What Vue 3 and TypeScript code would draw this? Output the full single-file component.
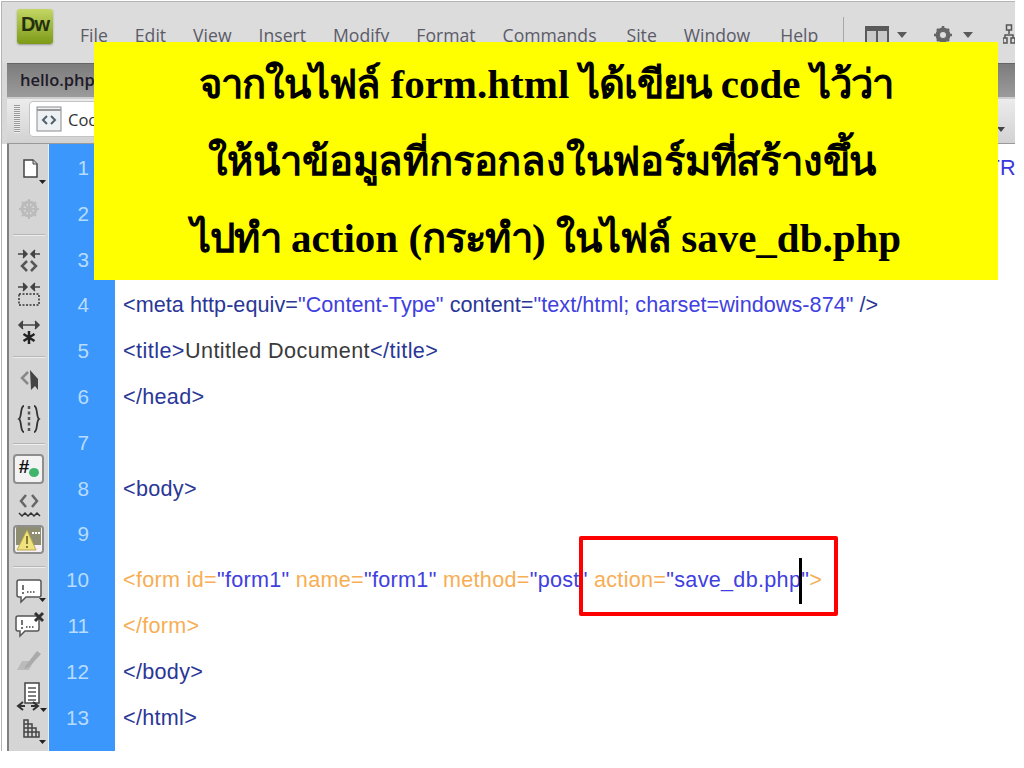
<script setup lang="ts">
const menus: string[] = ['File', 'Edit', 'View', 'Insert', 'Modify', 'Format', 'Commands', 'Site', 'Window', 'Help']
</script>

<template>
  <div class="page">
    <div class="window">
      <header class="titlebar">
        <div class="logo">Dw</div>
        <nav class="menus">
          <span v-for="m in menus" :key="m">{{ m }}</span>
        </nav>
        <div class="sep"></div>
        <svg class="ticon layout" width="44" height="18" viewBox="0 0 44 18">
          <rect x="0" y="0" width="24" height="18" fill="#5a5a5a" />
          <rect x="2" y="5" width="9" height="11" fill="#c9c9c9" />
          <rect x="13" y="5" width="9" height="11" fill="#c9c9c9" />
          <path d="M32 6h10l-5 6z" fill="#5a5a5a" />
        </svg>
        <svg class="ticon gear" width="42" height="18" viewBox="0 0 42 18">
          <circle cx="9" cy="9" r="5.500" fill="none" stroke="#666" stroke-width="4" />
          <path d="M9 0v18M0 9h18M3 3l12 12M15 3L3 15" stroke="#666" stroke-width="2.500" />
          <circle cx="9" cy="9" r="3" fill="#ddd" />
          <path d="M29 6h10l-5 6z" fill="#5a5a5a" />
        </svg>
        <svg class="ticon org" width="12" height="20" viewBox="0 0 12 20">
          <path d="M3.500 1h5v5h-5zM6 6v4M2 14v-3h8v3M0 14h4v5H0zM8 14h4v5H8z" fill="none" stroke="#555" stroke-width="1.500" />
        </svg>
      </header>

      <div class="tabbar"><span class="tab">hello.php</span></div>

      <div class="toolbar">
        <div class="grip"></div>
        <div class="codebtn">
          <svg width="26" height="26" viewBox="0 0 26 26">
            <rect x="1" y="1" width="24" height="24" fill="#eef1f3" stroke="#8b8b8b" />
            <path d="M1 4h24" stroke="#9a9a9a" stroke-width="2" />
            <path d="M11 10l-4 4 4 4M15 10l4 4-4 4" fill="none" stroke="#50606c" stroke-width="2" />
          </svg>
          <span>Code</span>
        </div>
        <svg class="tbarrow" width="8" height="5" viewBox="0 0 8 5"><path d="M0 0h8L4 5z" fill="#444" /></svg>
      </div>

      <div class="body">
        <aside class="rail">
          <svg class="i-doc" width="42" height="36" viewBox="0 0 42 36">
            <path d="M16 5h9l4 4v13H16z" fill="#fff" stroke="#444" stroke-width="1.500" />
            <path d="M25 5v4h4" fill="#ccc" stroke="#444" />
            <path d="M31 25h7l-3.500 4z" fill="#222" />
          </svg>
          <svg class="i-gear" width="42" height="34" viewBox="0 0 42 34">
            <circle cx="21" cy="17" r="7" fill="none" stroke="#bbb" stroke-width="3" />
            <path d="M21 7v20M11 17h20M14 10l14 14M28 10L14 24" stroke="#bbb" stroke-width="2" />
          </svg>
          <div class="divider d1"></div>
          <svg class="i-collapse" width="42" height="34" viewBox="0 0 42 34">
            <path d="M10 6h9M32 6h-9M15 2l4 4-4 4M27 2l-4 4 4 4" fill="#444" stroke="#444" stroke-width="1.500" />
            <path d="M19 13l-5 5 5 5M23 13l5 5-5 5" fill="none" stroke="#555" stroke-width="2.500" />
          </svg>
          <svg class="i-dotted" width="42" height="34" viewBox="0 0 42 34">
            <path d="M10 6h9M32 6h-9M15 2l4 4-4 4M27 2l-4 4 4 4" fill="#444" stroke="#444" stroke-width="1.500" />
            <rect x="11" y="13" width="20" height="11" fill="none" stroke="#333" stroke-width="1.500" stroke-dasharray="2 1.500" />
          </svg>
          <svg class="i-expand" width="42" height="34" viewBox="0 0 42 34">
            <path d="M11 7h20M15 3l-4 4 4 4M27 3l4 4-4 4" fill="#444" stroke="#444" stroke-width="1.500" />
            <path d="M21 13v13M15.500 16l11 7M26.500 16l-11 7" stroke="#222" stroke-width="2.500" />
          </svg>
          <div class="divider d2"></div>
          <svg class="i-cursor" width="42" height="28" viewBox="0 0 42 28">
            <path d="M20 7l-6 6 6 6" fill="none" stroke="#888" stroke-width="2.500" />
            <path d="M22 5l8 9v11l-3-4-4 4z" fill="#444" />
          </svg>
          <svg class="i-brace" width="42" height="34" viewBox="0 0 42 34">
            <path d="M16 4c-4 0-2 11-5 13 3 2 1 13 5 13M26 4c4 0 2 11 5 13-3 2-1 13-5 13" fill="none" stroke="#333" stroke-width="1.800" />
            <path d="M21 4v26" stroke="#555" stroke-width="2.500" stroke-dasharray="3 2.500" />
          </svg>
          <div class="divider d3"></div>
          <div class="railbtn hash">
            <span>#</span>
            <i></i>
          </div>
          <svg class="i-wave" width="42" height="28" viewBox="0 0 42 28">
            <path d="M18 3l-5 6 5 6M24 3l5 6-5 6" fill="none" stroke="#666" stroke-width="2.500" />
            <path d="M11 21l3 3 3-3 3 3 3-3 3 3 3-3 3 3" fill="none" stroke="#333" stroke-width="1.500" />
          </svg>
          <div class="railbtn warn">
            <svg width="27" height="25" viewBox="0 0 27 25">
              <rect x="1" y="0" width="25" height="18" fill="#8f8d72" />
              <rect x="1" y="18" width="25" height="7" fill="#f6f0f6" />
              <path d="M12 3l9 20H2z" fill="#efe27f" stroke="#b7a94b" />
              <path d="M12 9v8M12 19v2" stroke="#8a7d30" stroke-width="2" />
              <path d="M17 6h2M20 6h2M23 6h2" stroke="#fff" stroke-width="2" />
            </svg>
          </div>
          <div class="divider d4"></div>
          <svg class="i-c1" width="42" height="32" viewBox="0 0 42 32">
            <path d="M11 4h20a2 2 0 0 1 2 2v13a2 2 0 0 1-2 2H18l-5 5v-5h-2a2 2 0 0 1-2-2V6a2 2 0 0 1 2-2z" fill="#fff" stroke="#555" stroke-width="1.500" />
            <path d="M15 9v5M15 16v2" stroke="#444" stroke-width="1.500" />
            <path d="M19 16h9" stroke="#444" stroke-width="1.500" stroke-dasharray="1.500 1.500" />
            <path d="M31 22h7l-3.500 4z" fill="#222" />
          </svg>
          <svg class="i-c2" width="42" height="30" viewBox="0 0 42 30">
            <path d="M10 5h19a2 2 0 0 1 2 2v11a2 2 0 0 1-2 2H17l-5 5v-5h-2a2 2 0 0 1-2-2V7a2 2 0 0 1 2-2z" fill="#fff" stroke="#555" stroke-width="1.500" />
            <path d="M14 9v5M14 16v2" stroke="#444" stroke-width="1.500" />
            <path d="M18 16h9" stroke="#444" stroke-width="1.500" stroke-dasharray="1.500 1.500" />
            <path d="M27 2l8 8M35 2l-8 8" stroke="#333" stroke-width="3" />
          </svg>
          <svg class="i-pen" width="42" height="30" viewBox="0 0 42 30">
            <path d="M14 15h12l-5 9H9z" fill="#bbb" />
            <path d="M18 19L29 5l4 3-12 13-5 2z" fill="#aaa" />
          </svg>
          <svg class="i-doc2" width="42" height="36" viewBox="0 0 42 36">
            <path d="M17 3h14v20H17z" fill="#fff" stroke="#444" stroke-width="1.500" />
            <path d="M20 8h8M20 12h8M20 16h8M20 20h8" stroke="#555" stroke-width="1.500" />
            <path d="M17 26h-6M15 22l-5 4 5 4M23 26h6M25 22l5 4-5 4" fill="none" stroke="#333" stroke-width="2" />
            <path d="M32 28h7l-3.500 4z" fill="#222" />
          </svg>
          <svg class="i-tree" width="42" height="34" viewBox="0 0 42 34">
            <path d="M16 5h4v4h4v4h4v4h3v5H16zM16 9h4v13M16 13h12M16 17h15M24 13v9M28 17v5" fill="none" stroke="#444" stroke-width="1.500" />
            <path d="M31 25h7l-3.500 4z" fill="#222" />
          </svg>
        </aside>

        <div class="gutter">
          <span v-for="n in 13" :key="n">{{ n }}</span>
        </div>

        <main class="code">
          <div class="line tr">TR</div>
          <div class="line"></div>
          <div class="line"></div>
          <div class="line l-meta"><span class="nv">&lt;meta http-equiv=</span><span class="bl">"Content-Type"</span><span class="nv"> content=</span><span class="bl">"text/html; charset=windows-874"</span><span class="nv"> /&gt;</span></div>
          <div class="line l-title"><span class="nv">&lt;title&gt;</span><span class="dk">Untitled Document</span><span class="nv">&lt;/title&gt;</span></div>
          <div class="line"><span class="nv">&lt;/head&gt;</span></div>
          <div class="line"></div>
          <div class="line"><span class="nv">&lt;body&gt;</span></div>
          <div class="line"></div>
          <div class="line"><span class="or">&lt;form id=</span><span class="bl">"form1"</span><span class="or"> name=</span><span class="bl">"form1"</span><span class="or"> method=</span><span class="bl">"post"</span><span class="or"> action=</span><span class="bl">"save_db.php"</span><span class="or">&gt;</span></div>
          <div class="line"><span class="or">&lt;/form&gt;</span></div>
          <div class="line"><span class="nv">&lt;/body&gt;</span></div>
          <div class="line"><span class="nv">&lt;/html&gt;</span></div>
        </main>
      </div>
    </div>

    <div class="note">
      <p><span class="th">จากในไฟล์</span> <span class="en">form.html</span> <span class="th">ได้เขียน</span> <span class="en">code</span> <span class="th">ไว้ว่า</span></p>
      <p class="second"><span class="th">ให้นำข้อมูลที่กรอกลงในฟอร์มที่สร้างขึ้น</span></p>
      <p><span class="th">ไปทำ</span> <span class="en">action (</span><span class="th">กระทำ</span><span class="en">)</span> <span class="th">ในไฟล์</span> <span class="en">save_db.php</span></p>
    </div>
    <div class="redbox"></div>
    <div class="caret"></div>
  </div>
</template>

<style>
html, body { background: #fff; }
</style>

<style scoped>
.page {
  position: relative;
  width: 1024px;
  height: 768px;
  overflow: hidden;
  background: #fff;
}
.window {
  width: 1013px;
  height: 749px;
  margin-left: 1px;
  margin-top: 1px;
  border-top: 1px solid #b5b5b5;
  border-left: 1px solid #b5b5b5;
  display: flex;
  flex-direction: column;
  background: #d8d8d8;
  overflow: hidden;
}
.titlebar {
  height: 61px;
  flex: none;
  display: flex;
  align-items: flex-start;
  background: #dcdcdc;
  font-family: "Open Sans", sans-serif;
}
.logo {
  margin: 7px 0 0 15px;
  width: 36px;
  height: 35px;
  border-radius: 3px;
  background: linear-gradient(#c3d665, #7d9a17);
  box-shadow: 0 1px 2px #999;
  color: #25300e;
  font: bold 20px/30px "Liberation Sans", sans-serif;
  letter-spacing: -1px;
  text-align: center;
}
.menus {
  display: flex;
  gap: 27px;
  margin: 21px 0 0 27px;
  font-size: 17.600px;
  line-height: 24px;
  color: #5b5b66;
  white-space: nowrap;
}
.menus span:nth-child(8),
.menus span:nth-child(10) { margin-left: 3px; }
.sep {
  width: 1px;
  height: 30px;
  margin: 15px 0 0 auto;
  background: #a8a8a8;
}
.ticon { margin-top: 24px; flex: none; }
.layout { margin-left: 21px; }
.gear { margin-left: 25px; }
.org { margin-left: 27px; margin-top: 22px; }
.tabbar {
  height: 34px;
  flex: none;
  margin-left: 5px;
  background: linear-gradient(#7c7c7c, #9b9b9b);
  border-top: 1px solid #666;
  box-sizing: border-box;
  font: 600 16.500px/32px "Open Sans", sans-serif;
  color: #1e1a28;
}
.tab { padding-left: 13px; }
.toolbar {
  height: 47px;
  flex: none;
  box-sizing: border-box;
  margin-left: 5px;
  display: flex;
  align-items: flex-start;
  background: linear-gradient(#ececec, #d2d2d2);
  border-top: 2px solid #cfcfcf;
  border-bottom: 1px solid #999;
  position: relative;
}
.grip {
  width: 6px;
  height: 28px;
  margin: 6px 0 0 7px;
  background: repeating-linear-gradient(#999 0 1px, #eee 1px 2px);
}
.codebtn {
  display: flex;
  align-items: center;
  gap: 6px;
  margin: 2px 0 0 9px;
  height: 36px;
  padding-left: 6px;
  width: 300px;
  box-sizing: border-box;
  background: #fff;
  border: 1px solid #c4c4c4;
  border-radius: 4px;
  font: 16.500px "Open Sans", sans-serif;
  color: #333;
}
.tbarrow { position: absolute; left: 990px; top: 28px; }
.body {
  flex: 1;
  min-height: 0;
  display: flex;
  background: #fff;
}
.rail {
  width: 42px;
  flex: none;
  margin-left: 5px;
  box-sizing: border-box;
  border-left: 2px solid #808080;
  border-right: 1px solid #eee;
  background: #d5d5d5;
  display: flex;
  flex-direction: column;
  align-items: center;
  padding-top: 11px;
  overflow: hidden;
}
.rail svg { flex: none; }
.i-gear { margin-top: 1px; }
.i-collapse { margin-top: 13px; }
.i-dotted { margin-top: -1px; }
.i-expand { margin-top: 3px; }
.i-cursor { margin-top: 8px; }
.i-brace { margin-top: 9px; }
.i-wave { margin-top: 8px; }
.i-c1 { margin-top: 9px; }
.i-c2 { margin-top: 3px; }
.i-pen { margin-top: 5px; }
.i-doc2 { margin-top: 4px; }
.i-tree { margin-top: -1px; }
.divider {
  flex: none;
  width: 32px;
  height: 1px;
  background: #b5b5b5;
  box-shadow: 0 1px #eee;
}
.d1 { margin-top: 8px; }
.d2 { margin-top: 4px; }
.d3 { margin-top: 7px; }
.d4 { margin-top: 12px; }
.railbtn {
  flex: none;
  width: 31px;
  height: 30px;
  box-sizing: border-box;
  border: 2px solid #8e8e8e;
  border-radius: 4px;
  background: #f3f3f3;
  margin-left: -1px;
  position: relative;
  display: flex;
  align-items: center;
  justify-content: center;
  overflow: hidden;
}
.hash { margin-top: 10px; }
.hash span {
  font: bold 19px "Liberation Sans", sans-serif;
  color: #111;
  margin: -4px 8px 0 0;
}
.hash i {
  position: absolute;
  right: 3px;
  bottom: 5px;
  width: 10px;
  height: 9px;
  border-radius: 50%;
  background: #3fb56c;
}
.warn { margin-top: 5px; height: 29px; }
.gutter {
  width: 66px;
  flex: none;
  background: #3b97fb;
  display: grid;
  grid-auto-rows: 45.800px;
  align-content: start;
  padding-top: 1px;
  font: 20.700px/45.800px "Liberation Sans", sans-serif;
  color: #b7dcff;
  text-align: right;
  padding-right: 26px;
  box-sizing: border-box;
}
.code {
  flex: 1;
  min-width: 0;
  display: grid;
  grid-auto-rows: 45.800px;
  align-content: start;
  padding: 1px 0 0 8px;
  font: 21.600px/45.800px "Liberation Sans", sans-serif;
  letter-spacing: .3px;
  white-space: nowrap;
  overflow: hidden;
}
.l-meta { letter-spacing: .05px; }
.l-title { letter-spacing: .44px; }
.tr { color: #3838e0; text-align: right; margin-right: -1px; }
.nv { color: #2a3796; }
.bl { color: #4040e0; }
.dk { color: #3a3a3a; }
.or { color: #f7ae55; }
.note {
  position: absolute;
  left: 94px;
  top: 42px;
  width: 904px;
  height: 238px;
  background: #ffff00;
  display: flex;
  flex-direction: column;
  justify-content: center;
  text-align: center;
  font: bold 41px/76px "Liberation Serif", serif;
  color: #000;
}
.note p { margin: 0; }
.second { padding-right: 8px; }
.th { font-size: 40px; letter-spacing: -1px; }
.second .th { letter-spacing: -.2px; }
.en { font-size: 41px; }
.redbox {
  position: absolute;
  left: 579px;
  top: 536px;
  width: 259px;
  height: 80px;
  box-sizing: border-box;
  border: 4px solid #f00;
  border-radius: 2px;
}
.caret {
  position: absolute;
  left: 799px;
  top: 558px;
  width: 3px;
  height: 46px;
  background: #000;
}
</style>
